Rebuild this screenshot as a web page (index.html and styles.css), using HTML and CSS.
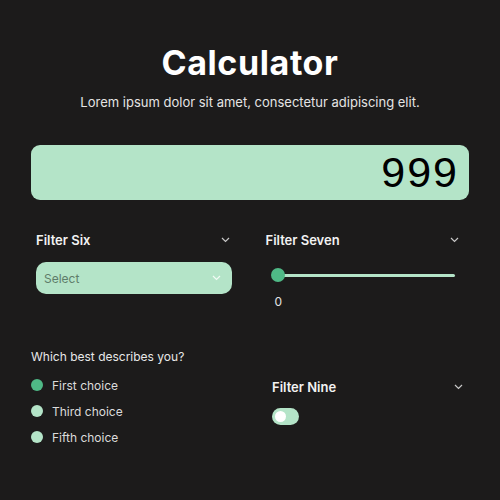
FILE: index.html
```html
<!DOCTYPE html>
<html lang="en">
<head>
<meta charset="utf-8">
<title>Calculator</title>
<link rel="stylesheet" href="styles.css">
</head>
<body>
<main class="page">
  <header class="hero">
    <h1 class="hero-title">Calculator</h1>
    <p class="hero-sub">Lorem ipsum dolor sit amet, consectetur adipiscing elit.</p>
  </header>

  <div class="display">999</div>

  <section class="row row-top">
    <div class="field">
      <div class="field-head">
        <span class="field-label">Filter Six</span>
        <svg class="chev" width="9" height="6" viewBox="0 0 9 6"><polyline points="1,1 4.5,4.5 8,1" fill="none" stroke="#c8c8c8" stroke-width="1.2"/></svg>
      </div>
      <div class="select">
        <span class="select-text">Select</span>
        <svg class="chev" width="9" height="6" viewBox="0 0 9 6"><polyline points="1,1 4.5,4.5 8,1" fill="none" stroke="#f2fbf5" stroke-width="1.2"/></svg>
      </div>
    </div>
    <div class="field">
      <div class="field-head">
        <span class="field-label">Filter Seven</span>
        <svg class="chev" width="9" height="6" viewBox="0 0 9 6"><polyline points="1,1 4.5,4.5 8,1" fill="none" stroke="#c8c8c8" stroke-width="1.2"/></svg>
      </div>
      <div class="slider">
        <div class="slider-track">
          <span class="slider-thumb"></span>
        </div>
      </div>
      <div class="slider-value">0</div>
    </div>
  </section>

  <section class="row row-bottom">
    <div class="radios">
      <p class="radios-q">Which best describes you?</p>
      <ul class="radio-list">
        <li class="radio-item"><span class="dot dot-on"></span><span>First choice</span></li>
        <li class="radio-item"><span class="dot"></span><span>Third choice</span></li>
        <li class="radio-item"><span class="dot"></span><span>Fifth choice</span></li>
      </ul>
    </div>
    <div class="field field-nine">
      <div class="field-head">
        <span class="field-label">Filter Nine</span>
        <svg class="chev" width="9" height="6" viewBox="0 0 9 6"><polyline points="1,1 4.5,4.5 8,1" fill="none" stroke="#c8c8c8" stroke-width="1.2"/></svg>
      </div>
      <div class="toggle"><span class="toggle-knob"></span></div>
    </div>
  </section>
</main>
</body>
</html>
```

FILE: styles.css
```css
* { box-sizing: border-box; }

html, body {
  margin: 0;
  padding: 0;
  background: #1c1b1b;
}

body {
  font-family: "Inter", "Liberation Sans", sans-serif;
  color: #ececec;
  width: 500px;
  height: 500px;
  overflow: hidden;
}

.page {
  padding: 43px 31px 0;
}

.hero {
  text-align: center;
}

.hero-title {
  margin: 0;
  font-size: 34px;
  line-height: 40px;
  font-weight: 700;
  color: #ffffff;
  letter-spacing: 0.6px;
}

.hero-sub {
  margin: 9px 0 0;
  font-size: 13px;
  line-height: 20px;
  color: #e4e4e4;
}

.display {
  margin-top: 33px;
  height: 55px;
  border-radius: 9px;
  background: #b4e4c8;
  color: #000;
  font-family: "Liberation Sans", Arial, sans-serif;
  font-size: 43px;
  line-height: 55px;
  text-align: right;
  padding-right: 10px;
  letter-spacing: 2px;
}

.row {
  display: grid;
  grid-template-columns: 1fr 1fr;
}

.row-top {
  margin-top: 32px;
  padding: 0 8px 0 5px;
  column-gap: 34px;
}

.field-head {
  display: flex;
  align-items: center;
  justify-content: space-between;
  height: 16px;
  padding-right: 2px;
}

.field-label {
  font-size: 13px;
  line-height: 16px;
  font-weight: 600;
  color: #f2f2f2;
}

.chev {
  display: block;
}

.select {
  margin-top: 14px;
  height: 32px;
  border-radius: 10px;
  background: #b4e4c8;
  display: flex;
  align-items: center;
  justify-content: space-between;
  padding: 0 11px 0 8px;
}

.select-text {
  font-size: 12px;
  color: #5f7d6a;
}

.slider {
  margin-top: 14px;
  height: 26px;
  display: flex;
  align-items: center;
  padding: 0 6px 0 12px;
}

.slider-track {
  position: relative;
  flex: 1;
  height: 3px;
  border-radius: 2px;
  background: #b4e4c8;
}

.slider-thumb {
  position: absolute;
  left: -7px;
  top: -5.5px;
  width: 14px;
  height: 14px;
  border-radius: 50%;
  background: #4fb986;
}

.slider-value {
  margin-top: 6px;
  padding-left: 9px;
  font-size: 12px;
  line-height: 16px;
  color: #e4e4e4;
}

.row-bottom {
  margin-top: 39px;
  padding-right: 2px;
  column-gap: 46px;
  align-items: start;
}

.radios-q {
  margin: 0;
  font-size: 12px;
  line-height: 16px;
  color: #e8e8e8;
}

.radio-list {
  list-style: none;
  margin: 12px 0 0;
  padding: 0;
  display: flex;
  flex-direction: column;
  gap: 10px;
}

.radio-item {
  display: flex;
  align-items: center;
  gap: 9px;
  height: 16px;
  font-size: 12px;
  color: #dcdcdc;
}

.dot {
  width: 12px;
  height: 12px;
  border-radius: 50%;
  background: #b4e4c8;
  flex: none;
}

.dot-on {
  background: #4fb986;
}

.field-nine {
  margin-top: 30px;
}

.field-nine .field-head {
  padding-right: 4px;
}

.toggle {
  margin-top: 13px;
  width: 27px;
  height: 17px;
  border-radius: 9px;
  background: #b4e4c8;
  display: flex;
  align-items: center;
  padding-left: 3px;
}

.toggle-knob {
  width: 11px;
  height: 11px;
  border-radius: 50%;
  background: #ffffff;
}
```
